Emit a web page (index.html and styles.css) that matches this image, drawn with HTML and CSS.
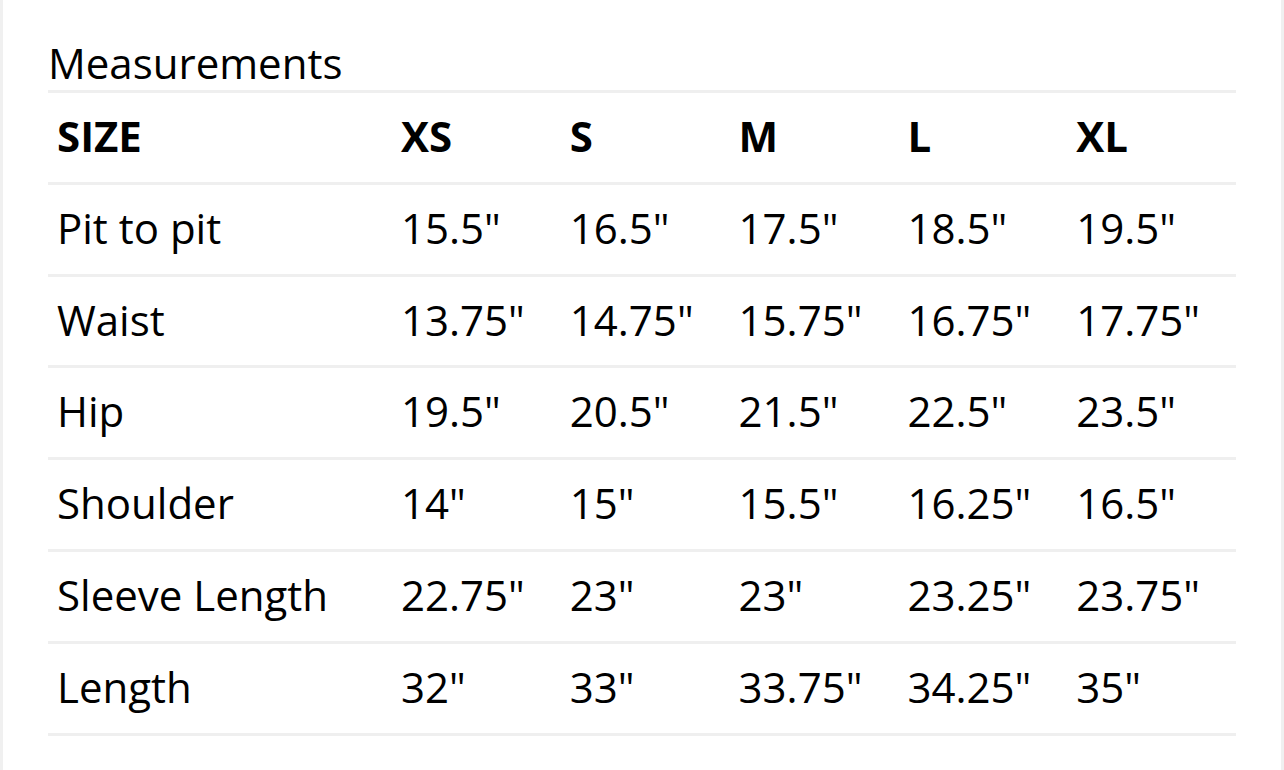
FILE: index.html
```html
<!DOCTYPE html>
<html lang="en">
<head>
<meta charset="utf-8">
<title>Measurements</title>
<link rel="stylesheet" href="styles.css">
</head>
<body>
<div class="frame">
  <div class="page">
    <h2 class="title">Measurements</h2>
    <table class="sizes">
      <thead>
        <tr><th>SIZE</th><th>XS</th><th>S</th><th>M</th><th>L</th><th>XL</th></tr>
      </thead>
      <tbody>
        <tr><td>Pit to pit</td><td>15.5"</td><td>16.5"</td><td>17.5"</td><td>18.5"</td><td>19.5"</td></tr>
        <tr><td>Waist</td><td>13.75"</td><td>14.75"</td><td>15.75"</td><td>16.75"</td><td>17.75"</td></tr>
        <tr><td>Hip</td><td>19.5"</td><td>20.5"</td><td>21.5"</td><td>22.5"</td><td>23.5"</td></tr>
        <tr><td>Shoulder</td><td>14"</td><td>15"</td><td>15.5"</td><td>16.25"</td><td>16.5"</td></tr>
        <tr><td>Sleeve Length</td><td>22.75"</td><td>23"</td><td>23"</td><td>23.25"</td><td>23.75"</td></tr>
        <tr><td>Length</td><td>32"</td><td>33"</td><td>33.75"</td><td>34.25"</td><td>35"</td></tr>
      </tbody>
    </table>
  </div>
</div>
</body>
</html>
```
FILE: styles.css
```css
html, body {
  margin: 0;
  padding: 0;
}
body {
  background: #f0f0f0;
  font-family: "Open Sans", "Noto Sans", sans-serif;
  color: #000;
}
.frame {
  padding: 0 3px;
  min-height: 770px;
  box-sizing: border-box;
  display: flex;
}
.page {
  flex: 1;
  background: #fff;
  padding: 37px 45px 0 45px;
}
.title {
  margin: 0 0 2px 0;
  font-size: 42px;
  font-weight: 400;
  line-height: 51px;
}
.sizes {
  width: 1188px;
  border-collapse: collapse;
  table-layout: fixed;
  border-bottom: 3px solid #efefef;
}
.sizes tr {
  border-top: 3px solid #efefef;
}
.sizes th,
.sizes td {
  font-size: 42px;
  line-height: 86.8px;
  padding: 0 0 2px 9px;
  text-align: left;
  white-space: nowrap;
  vertical-align: middle;
}
.sizes th {
  font-weight: 700;
}
.sizes th:first-child,
.sizes td:first-child {
  width: 335px;
}
```
